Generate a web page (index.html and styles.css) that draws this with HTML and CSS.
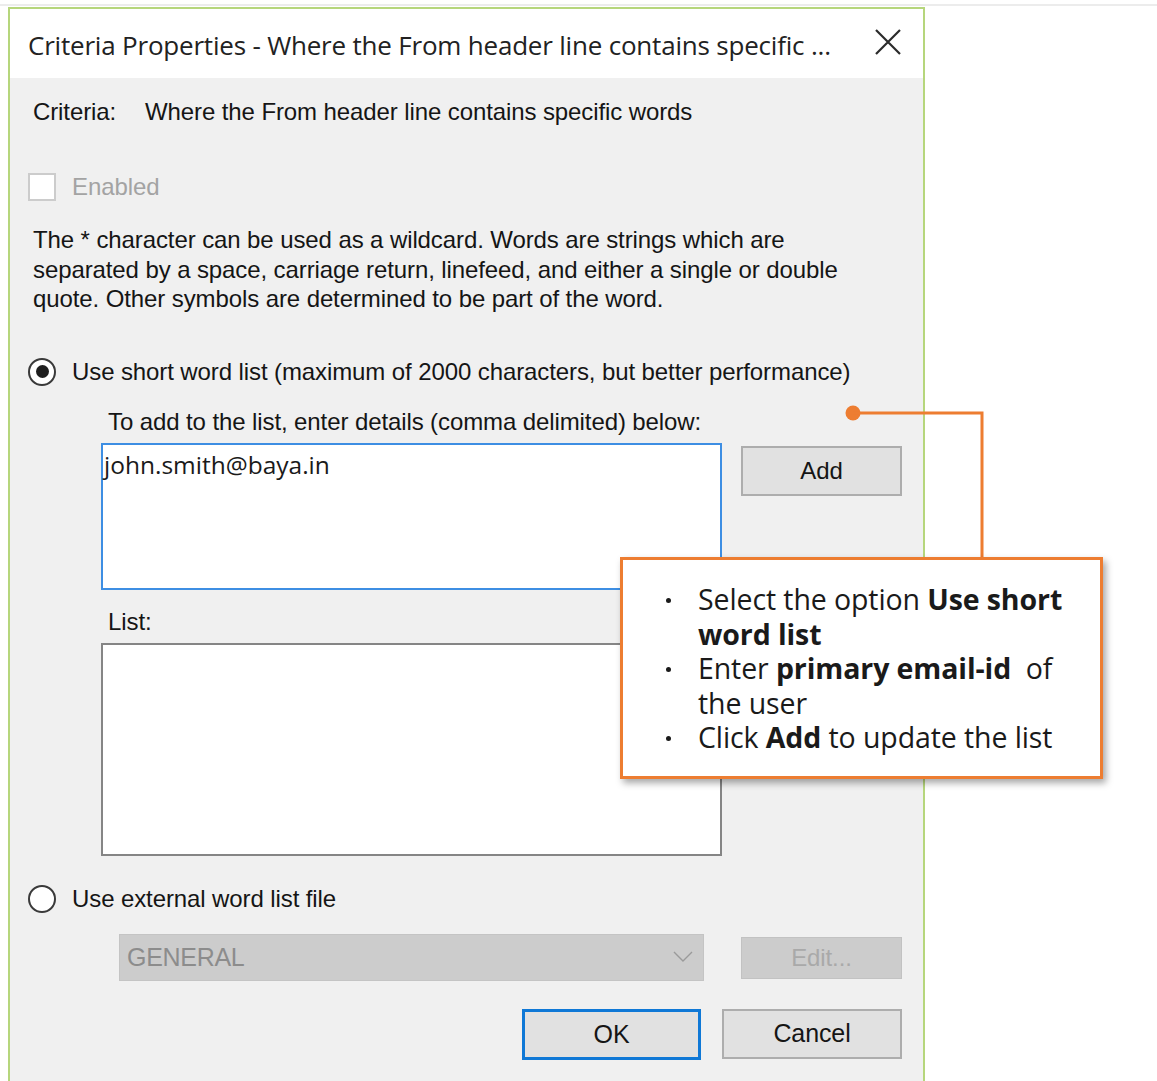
FILE: index.html
```html
<!DOCTYPE html>
<html lang="en">
<head>
<meta charset="utf-8">
<title>Criteria Properties</title>
<link rel="stylesheet" href="styles.css">
</head>
<body>
<div class="topline"></div>
<div class="dialog">
  <div class="titlebar">
    <span class="title">Criteria Properties - Where the From header line contains specific ...</span>
    <svg class="close" width="26" height="26" viewBox="0 0 26 26"><path d="M1 1 L25 25 M25 1 L1 25" stroke="#2b2b2b" stroke-width="2.2" fill="none"/></svg>
  </div>
  <div class="content">
    <div class="row crit">
      <span class="crit-label">Criteria:</span>
      <span class="crit-value">Where the From header line contains specific words</span>
    </div>
    <div class="row enabled">
      <span class="checkbox"></span>
      <span class="disabled-text">Enabled</span>
    </div>
    <p class="help">The * character can be used as a wildcard. Words are strings which are<br>separated by a space, carriage return, linefeed, and either a single or double<br>quote. Other symbols are determined to be part of the word.</p>
    <div class="row radio-row first">
      <span class="radio checked"></span>
      <span>Use short word list (maximum of 2000 characters, but better performance)</span>
    </div>
    <div class="row sub-label add-label">To add to the list, enter details (comma delimited) below:</div>
    <div class="entry-row">
      <div class="textbox focused">john.smith@baya.in</div>
      <div class="btn add">Add</div>
    </div>
    <div class="row sub-label list-label">List:</div>
    <div class="listbox"></div>
    <div class="row radio-row second">
      <span class="radio"></span>
      <span>Use external word list file</span>
    </div>
    <div class="file-row">
      <div class="combo">
        <span>GENERAL</span>
        <svg width="20" height="12" viewBox="0 0 20 12"><path d="M1 1 L10 10 L19 1" stroke="#9a9a9a" stroke-width="1.4" fill="none"/></svg>
      </div>
      <div class="btn edit">Edit...</div>
    </div>
    <div class="footer">
      <div class="btn ok">OK</div>
      <div class="btn cancel">Cancel</div>
    </div>

    <svg class="connector" width="150" height="160" viewBox="0 0 150 160">
      <circle cx="9" cy="9" r="7.5" fill="#ed7d31"/>
      <path d="M9 9 H138 V160" stroke="#ed7d31" stroke-width="3" fill="none"/>
    </svg>
    <div class="callout">
      <ul>
        <li>Select the option <b>Use short</b><br><b>word list</b></li>
        <li>Enter <b>primary email-id</b>&nbsp; of<br>the user</li>
        <li>Click <b>Add</b> to update the list</li>
      </ul>
    </div>
  </div>
</div>
</body>
</html>
```
FILE: styles.css
```css
html, body {
  margin: 0;
  padding: 0;
  background: #ffffff;
  height: 1081px;
  overflow: hidden;
}

.topline {
  height: 2px;
  margin-top: 4px;
  background: #ececec;
}

.dialog {
  margin-left: 8px;
  margin-top: 1px;
  width: 913px;
  height: 1100px;
  border: 2px solid #b6d67c;
  border-bottom: none;
  background: #f0f0f0;
  font-family: "Liberation Sans", Arial, sans-serif;
  color: #151515;
}

.titlebar {
  height: 69px;
  background: #ffffff;
  display: flex;
  align-items: center;
  justify-content: space-between;
  padding: 0 22px 0 18px;
}

.title {
  font-family: "Open Sans", "Noto Sans", sans-serif;
  font-size: 26px;
  color: #222;
  letter-spacing: -0.2px;
  padding-top: 2px;
  white-space: nowrap;
}

.close {
  display: block;
  margin-top: -4px;
  flex: none;
}

.content {
  position: relative;
  padding: 18px 0 0 18px;
  font-size: 24px;
  letter-spacing: -0.1px;
}

.row {
  display: flex;
  align-items: center;
  height: 32px;
  white-space: nowrap;
}

.crit {
  padding-left: 5px;
}

.crit-label {
  width: 112px;
}

.enabled {
  margin-top: 43px;
}

.checkbox {
  width: 24px;
  height: 24px;
  border: 2px solid #cccccc;
  background: #ffffff;
  margin-right: 16px;
}

.disabled-text {
  color: #a3a3a3;
}

.help {
  margin: 22px 0 0 5px;
  line-height: 29.5px;
  white-space: nowrap;
}

.radio-row.first {
  margin-top: 42px;
}

.radio {
  box-sizing: border-box;
  width: 28px;
  height: 28px;
  border: 2.5px solid #3a3a3a;
  border-radius: 50%;
  background: #ffffff;
  margin-right: 16px;
  display: flex;
  align-items: center;
  justify-content: center;
}

.radio.checked::after {
  content: "";
  width: 13px;
  height: 13px;
  border-radius: 50%;
  background: #1e1e1e;
}

.sub-label {
  padding-left: 80px;
}

.add-label {
  margin-top: 18px;
}

.entry-row {
  display: flex;
  align-items: flex-start;
  margin-top: 5px;
  padding-left: 73px;
}

.textbox {
  box-sizing: border-box;
  width: 621px;
  height: 147px;
  background: #ffffff;
  border: 2px solid #3d8ee3;
  font-family: "Open Sans", "Noto Sans", sans-serif;
  font-size: 24.5px;
  letter-spacing: 0;
  padding: 3px 0 0 1px;
  line-height: 34px;
  color: #1a1a1a;
}

.btn {
  box-sizing: border-box;
  display: flex;
  align-items: center;
  justify-content: center;
  background: #e1e1e1;
  border: 2px solid #adadad;
}

.add {
  width: 161px;
  height: 50px;
  margin: 3px 0 0 19px;
}

.list-label {
  margin-top: 16px;
}

.listbox {
  box-sizing: border-box;
  width: 621px;
  height: 213px;
  margin: 5px 0 0 73px;
  background: #ffffff;
  border: 2px solid #858585;
}

.radio-row.second {
  margin-top: 27px;
}

.file-row {
  display: flex;
  align-items: flex-start;
  margin-top: 19px;
  padding-left: 91px;
}

.combo {
  box-sizing: border-box;
  width: 585px;
  height: 47px;
  background: #cccccc;
  border: 1px solid #c4c4c4;
  display: flex;
  align-items: center;
  justify-content: space-between;
  padding: 0 10px 0 7px;
  color: #8c8c8c;
  font-size: 25px;
  letter-spacing: -0.3px;
}

.edit {
  width: 161px;
  height: 42px;
  margin: 3px 0 0 37px;
  background: #cccccc;
  border: 1px solid #c2c2c2;
  color: #a9a9a9;
}

.footer {
  display: flex;
  justify-content: flex-end;
  gap: 21px;
  margin-top: 28px;
  width: 874px;
}

.ok {
  width: 179px;
  height: 51px;
  border: 3px solid #0f78d6;
  font-size: 25px;
}

.cancel {
  width: 180px;
  height: 50px;
  font-size: 25px;
}

/* callout annotation over the dialog */
.connector {
  position: absolute;
  left: 834px;
  top: 326px;
  overflow: visible;
}

.callout {
  position: absolute;
  left: 610px;
  top: 479px;
  box-sizing: border-box;
  width: 483px;
  height: 222px;
  background: #ffffff;
  border: 3px solid #ed7d31;
  box-shadow: 3px 4px 7px rgba(0, 0, 0, 0.35);
  font-family: "Open Sans", "Noto Sans", sans-serif;
  font-size: 28.5px;
  letter-spacing: -0.1px;
  color: #1a1a1a;
  z-index: 2;
  white-space: nowrap;
}

.callout ul {
  margin: 22px 0 0 0;
  padding: 0 0 0 75px;
  list-style: none;
  line-height: 34.5px;
}

.callout li {
  position: relative;
}

.callout li::before {
  content: "";
  position: absolute;
  left: -32px;
  top: 16px;
  width: 5px;
  height: 5px;
  border-radius: 50%;
  background: #1a1a1a;
}

.callout b {
  font-weight: 700;
}
```
